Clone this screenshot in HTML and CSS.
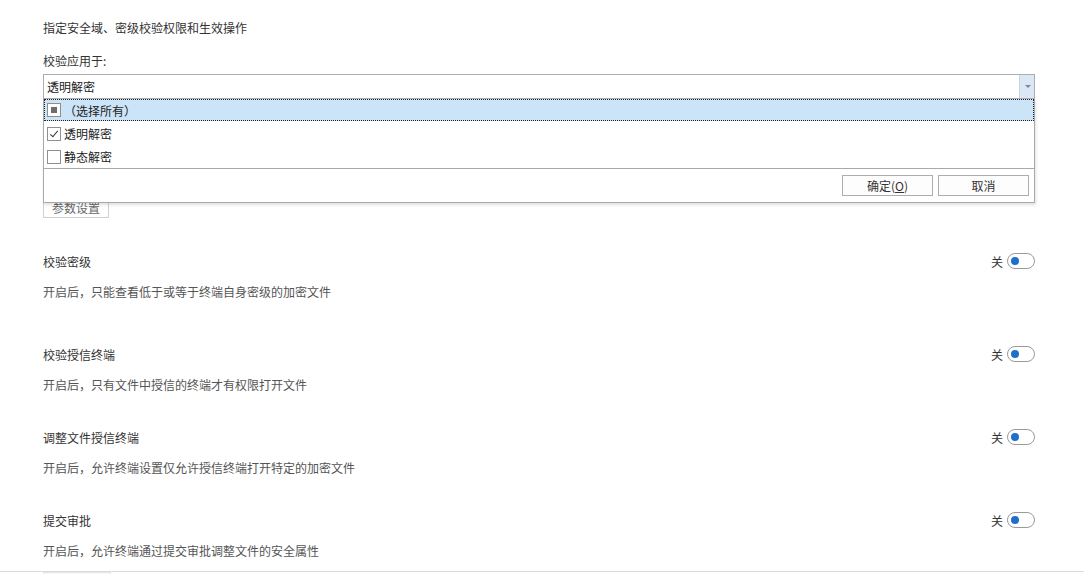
FILE: index.html
```html
<!DOCTYPE html>
<html lang="zh-CN">
<head>
<meta charset="UTF-8">
<meta name="viewport" content="width=device-width, initial-scale=1.0">
<title>校验设置</title>
<link rel="stylesheet" href="styles.css">
</head>
<body>

<div class="page">
    <div class="intro">指定安全域、密级校验权限和生效操作</div>
    <div class="field-label">校验应用于:</div>

    <div class="combo">
        <div class="combo-box">
            <span class="combo-text">透明解密</span>
            <span class="combo-arrow"></span>
        </div>
        <div class="combo-popup">
            <div class="combo-list">
                <div class="combo-item active"><span class="check part"></span>（选择所有）</div>
                <div class="combo-item"><span class="check on"></span>透明解密</div>
                <div class="combo-item"><span class="check"></span>静态解密</div>
            </div>
            <div class="combo-actions">
                <button class="popup-button">确定(<u>O</u>)</button>
                <button class="popup-button">取消</button>
            </div>
        </div>
    </div>

    <button class="param-button">参数设置</button>

    <div class="option first">
        <div class="option-head">
            <span class="option-title">校验密级</span>
            <span class="switch-label">关</span><span class="switch"></span>
        </div>
        <div class="option-desc">开启后，只能查看低于或等于终端自身密级的加密文件</div>
    </div>

    <div class="option">
        <div class="option-head">
            <span class="option-title">校验授信终端</span>
            <span class="switch-label">关</span><span class="switch"></span>
        </div>
        <div class="option-desc">开启后，只有文件中授信的终端才有权限打开文件</div>
    </div>

    <div class="option">
        <div class="option-head">
            <span class="option-title">调整文件授信终端</span>
            <span class="switch-label">关</span><span class="switch"></span>
        </div>
        <div class="option-desc">开启后，允许终端设置仅允许授信终端打开特定的加密文件</div>
    </div>

    <div class="option">
        <div class="option-head">
            <span class="option-title">提交审批</span>
            <span class="switch-label">关</span><span class="switch"></span>
        </div>
        <div class="option-desc">开启后，允许终端通过提交审批调整文件的安全属性</div>
    </div>
</div>

<div class="footer">
    <span class="footer-button"></span>
</div>

</body>
</html>
```

FILE: styles.css
```css
body {
    margin: 0;
    padding: 0;
    background-color: #fff;
    color: #333;
    font-family: "Noto Sans CJK SC", "Microsoft YaHei", sans-serif;
    font-size: 12px;
    overflow: hidden;
}
.page {
    padding: 20px 49px 0 43px;
}
.intro {
    line-height: 16px;
    color: #333;
}
.field-label {
    margin-top: 17px;
    line-height: 16px;
    color: #333;
}

/* Combo box with open popup */
.combo {
    position: relative;
    margin-top: 5px;
}
.combo-box {
    display: flex;
    align-items: center;
    height: 23px;
    border: 1px solid #abadb3;
    background-color: #fff;
}
.combo-text {
    flex: 1;
    padding-left: 3px;
    color: #222;
}
.combo-arrow {
    width: 14px;
    height: 23px;
    background-color: #dbe7f4;
    border-left: 1px solid #c5d3e4;
    position: relative;
}
.combo-arrow::after {
    content: "";
    position: absolute;
    left: 5px;
    top: 10px;
    border-left: 3px solid transparent;
    border-right: 3px solid transparent;
    border-top: 3px solid #7a8a9c;
}
.combo-popup {
    position: absolute;
    top: 25px;
    left: 0;
    right: 0;
    background-color: #fff;
    border: 1px solid #a9a9a9;
    border-top: none;
    box-shadow: 1px 2px 3px rgba(0, 0, 0, 0.12);
    z-index: 10;
}
.combo-list {
    border-bottom: 1px solid #a9a9a9;
}
.combo-item {
    display: flex;
    align-items: center;
    height: 23px;
    padding-left: 3px;
    color: #222;
    box-sizing: border-box;
}
.combo-item.active {
    background-color: #cce4f7;
    border: 1px dotted #222;
    padding-left: 2px;
    height: 22px;
    margin-bottom: 1px;
}
.check {
    width: 12px;
    height: 12px;
    border: 1px solid #8f8f8f;
    background-color: #fff;
    margin-right: 3px;
    position: relative;
    flex-shrink: 0;
}
.check.part::after {
    content: "";
    position: absolute;
    left: 3px;
    top: 3px;
    width: 6px;
    height: 6px;
    background-color: #6d6d6d;
}
.check.on::after {
    content: "";
    position: absolute;
    left: 4px;
    top: 1px;
    width: 3px;
    height: 7px;
    border-right: 1.5px solid #333;
    border-bottom: 1.5px solid #333;
    transform: rotate(40deg);
}
.combo-actions {
    display: flex;
    justify-content: flex-end;
    gap: 5px;
    padding: 6px 5px 6px 0;
}
.popup-button {
    width: 91px;
    height: 21px;
    border: 1px solid #adadad;
    background-color: #fdfdfd;
    color: #333;
    font-family: inherit;
    font-size: 12px;
    padding: 0;
}

.param-button {
    display: block;
    margin-top: 98px;
    width: 66px;
    height: 21px;
    border: 1px solid #d0d0d0;
    background-color: #fff;
    color: #666;
    font-family: inherit;
    font-size: 12px;
    padding: 0;
}

/* Option rows */
.option {
    margin-top: 34px;
}
.option.first {
    margin-top: 33px;
    padding-bottom: 10px;
}
.option-head {
    display: flex;
    align-items: center;
    height: 20px;
}
.option-title {
    flex: 1;
    color: #333;
}
.switch-label {
    color: #333;
    margin-right: 4px;
}
.switch {
    width: 26px;
    height: 14px;
    border: 1px solid #9a9a9a;
    border-radius: 8px;
    position: relative;
    background-color: #fff;
}
.switch::after {
    content: "";
    position: absolute;
    left: 3px;
    top: 3px;
    width: 8px;
    height: 8px;
    border-radius: 50%;
    background-color: #1f70c9;
}
.option-desc {
    margin-top: 13px;
    line-height: 16px;
    color: #555;
}

.footer {
    margin-top: 12px;
    border-top: 1px solid #dcdcdc;
    padding-left: 43px;
    height: 10px;
}
.footer-button {
    display: block;
    width: 66px;
    height: 8px;
    border: 1px solid #e4e4e4;
    border-bottom: none;
    background-color: #fafafa;
}
```
